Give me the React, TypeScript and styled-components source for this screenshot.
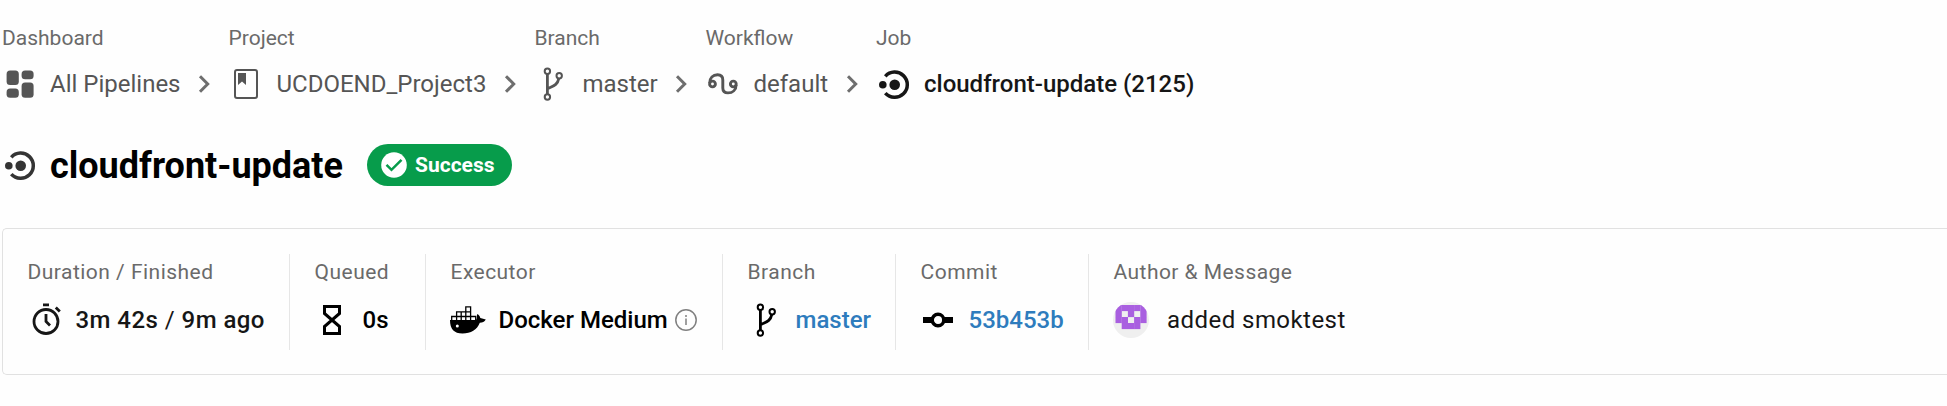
import React from 'react';
import styled, { createGlobalStyle } from 'styled-components';

const Global = createGlobalStyle`
  body { margin: 0; background: #fefefe; font-family: Roboto, "Liberation Sans", sans-serif; overflow: hidden; }
  *, *::before, *::after { box-sizing: border-box; }
`;

const Page = styled.main`
  padding: 22px 0 0 2px;
`;

const Breadcrumbs = styled.nav`
  display: flex;
  height: 84px;
`;

const Crumb = styled.div<{ $width: number }>`
  width: ${p => p.$width}px;
  flex: none;
  white-space: nowrap;
`;

const Label = styled.div<{ $spacing?: number }>`
  font-size: 21px;
  line-height: 32px;
  color: #6a6a6a;
  letter-spacing: ${p => p.$spacing ?? 0}px;
`;

const CrumbLink = styled.div<{ $active?: boolean }>`
  display: flex;
  align-items: center;
  height: 36px;
  margin-top: 12px;
  font-size: 24px;
  font-weight: ${p => (p.$active ? 500 : 400)};
  color: ${p => (p.$active ? '#161616' : '#555')};
`;

const Icon = styled.svg<{ $gap?: number }>`
  width: 36px;
  height: 36px;
  margin-left: -0.5px;
  margin-right: ${p => p.$gap ?? 12.5}px;
  flex: none;
  overflow: visible;
`;

const Chevron = styled.svg`
  width: 24px;
  height: 24px;
  margin-left: auto;
  margin-right: 12.5px;
  flex: none;
`;

const Header = styled.header`
  display: flex;
  align-items: center;
  height: 42px;
  margin-top: 38px;
`;

const Title = styled.h1`
  margin: 0;
  width: 317px;
  padding-top: 1px;
  font-size: 36px;
  line-height: 42px;
  font-weight: 700;
  color: #000;
  white-space: nowrap;
`;

const Badge = styled.div`
  display: flex;
  align-items: center;
  gap: 8px;
  width: 145px;
  height: 42px;
  padding-left: 14px;
  border-radius: 21px;
  background: #079c4b;
  color: #fff;
  font-size: 21px;
  font-weight: 700;
`;

const Card = styled.section`
  display: flex;
  height: 147px;
  margin-top: 42px;
  padding: 25px 0 0 24.5px;
  border: 1px solid #e1e1e1;
  border-right: 0;
  border-radius: 5px 0 0 5px;
`;

const Cell = styled.div<{ $width?: number }>`
  width: ${p => (p.$width ? `${p.$width}px` : 'auto')};
  height: 96px;
  flex: none;
  margin-right: 24.5px;
  padding-top: 2px;
  border-right: ${p => (p.$width ? '1px solid #e6e6e6' : '0')};
  white-space: nowrap;
`;

const Value = styled.div<{ $color?: string; $weight?: number; $spacing?: number }>`
  display: flex;
  align-items: center;
  height: 36px;
  margin-top: 14px;
  font-size: 24px;
  font-weight: ${p => p.$weight ?? 500};
  letter-spacing: ${p => p.$spacing ?? 0}px;
  color: ${p => p.$color ?? '#000'};
`;

const Slash = styled.span`
  font-weight: 400;
`;

const Info = styled.svg`
  width: 22px;
  height: 22px;
  margin-left: 7px;
`;

const Arrow = () => (
  <Chevron viewBox="0 0 24 24" fill="none" stroke="#6e6e6e" strokeWidth="3">
    <path d="M8 4.2 15.7 12 8 19.8" />
  </Chevron>
);

const BranchIcon = ({ color }: { color: string }) => (
  <Icon viewBox="0 0 36 36" fill="none" stroke={color} strokeWidth="2">
    <circle cx="13.4" cy="5.2" r="2.7" />
    <circle cx="25.2" cy="9.8" r="2.7" />
    <circle cx="13.4" cy="31" r="2.7" />
    <path d="M13.4 8v20M13.9 22.5c5-2.5 9.5-3 10.8-9.8" strokeWidth="2.8" />
  </Icon>
);

const JobIcon = ({ color }: { color: string }) => (
  <Icon viewBox="0 0 36 36" fill={color}>
    <circle cx="6.8" cy="18.7" r="3.8" />
    <circle cx="18.7" cy="18.7" r="5.3" />
    <path d="M9.3 10.3A12.6 12.6 0 1 1 9.3 27.1" fill="none" stroke={color} strokeWidth="3.5" />
  </Icon>
);

const identicon = ['11111', '10101', '11011', '01110'];

export default function App() {
  return (
    <Page>
      <Global />
      <Breadcrumbs>
        <Crumb $width={226.5}>
          <Label>Dashboard</Label>
          <CrumbLink>
            <Icon viewBox="0 0 36 36" fill="#555">
              <rect x="4.6" y="4.4" width="12.2" height="14.6" rx="3.5" />
              <rect x="19.6" y="4.4" width="12" height="8.8" rx="3.5" />
              <rect x="4.6" y="22.4" width="12.2" height="9.3" rx="3.5" />
              <rect x="19.6" y="16.4" width="12" height="15.3" rx="3.5" />
            </Icon>
            All Pipelines
            <Arrow />
          </CrumbLink>
        </Crumb>
        <Crumb $width={306}>
          <Label>Project</Label>
          <CrumbLink>
            <Icon viewBox="0 0 36 36">
              <rect x="7" y="4" width="22" height="28" rx="2" fill="none" stroke="#555" strokeWidth="2" />
              <path d="M10 7h8v12l-4-3.5-4 3.5z" fill="#555" />
            </Icon>
            UCDOEND_Project3
            <Arrow />
          </CrumbLink>
        </Crumb>
        <Crumb $width={171}>
          <Label>Branch</Label>
          <CrumbLink>
            <BranchIcon color="#555" />
            master
            <Arrow />
          </CrumbLink>
        </Crumb>
        <Crumb $width={170.5}>
          <Label>Workflow</Label>
          <CrumbLink>
            <Icon viewBox="-0.5 0 36 36" fill="none" stroke="#555" strokeWidth="2.9">
              <circle cx="7" cy="18" r="2.9" />
              <circle cx="27.8" cy="18" r="2.9" />
              <path d="M4.2 17C4.2 12 7.5 8.8 12 8.8c3.5 0 5.3 2 5.3 5.2v8c0 3 2 4.9 5.2 4.9 4.6 0 8.1-3 8.1-8" />
            </Icon>
            default
            <Arrow />
          </CrumbLink>
        </Crumb>
        <Crumb $width={400}>
          <Label>Job</Label>
          <CrumbLink $active>
            <JobIcon color="#161616" />
            cloudfront-update (2125)
          </CrumbLink>
        </Crumb>
      </Breadcrumbs>

      <Header>
        <JobIcon color="#343434" />
        <Title>cloudfront-update</Title>
        <Badge>
          <svg width="26" height="26" viewBox="0 0 26 26">
            <circle cx="13" cy="13" r="12.8" fill="#fff" />
            <path d="M5.5 12.8 10.5 17.8 20.5 7.8" fill="none" stroke="#079c4b" strokeWidth="2.5" />
          </svg>
          Success
        </Badge>
      </Header>

      <Card>
        <Cell $width={262.5}>
          <Label $spacing={0.48}>Duration / Finished</Label>
          <Value $color="#161616" $spacing={0.45}>
            <Icon viewBox="0 0 36 36" fill="none" stroke="#161616" strokeWidth="2.8">
              <circle cx="19" cy="19.5" r="12" />
              <path d="M16 2.8h6M28.8 5.6l4 4M19 12v7.5l4 4" />
            </Icon>
            <span>3m 42s <Slash>/</Slash> 9m ago</span>
          </Value>
        </Cell>
        <Cell $width={111.5}>
          <Label $spacing={0.5}>Queued</Label>
          <Value>
            <Icon viewBox="0 0 36 36" fill="none" stroke="#000" strokeWidth="3">
              <path d="M10.5 4.5h15v7L10.5 24.5v7h15v-7L10.5 11.5z" />
            </Icon>
            0s
          </Value>
        </Cell>
        <Cell $width={272.5}>
          <Label $spacing={0.45}>Executor</Label>
          <Value>
            <Icon viewBox="0 0 36 36">
              <path d="M0 18h26c1.5-1.5.3-3.6 1.3-6 1.700.8 2.700 2.300 3 4l5.500 1.600c-1.300 2.400-3.300 3.200-6 3.200C27 28 21 31.500 12.500 31.500 4 31.500 0 27 0 18z" />
              <path d="M1.7 18v-3.500h24V18M6.600 18v-8.200h14V18M15.800 18V4.900h4.800V18M11.200 10v8" fill="none" stroke="#000" strokeWidth="1.3" />
              <circle cx="7.300" cy="24" r="1.5" fill="#fff" />
            </Icon>
            Docker Medium
            <Info viewBox="0 0 22 22" fill="none" stroke="#808080" strokeWidth="1.5">
              <circle cx="11" cy="11" r="10.2" />
              <path d="M11 9.500V16M11 6v2" />
            </Info>
          </Value>
        </Cell>
        <Cell $width={148.5}>
          <Label $spacing={0.5}>Branch</Label>
          <Value $color="#2e7cbd">
            <BranchIcon color="#000" />
            master
          </Value>
        </Cell>
        <Cell $width={168.5}>
          <Label $spacing={0.5}>Commit</Label>
          <Value $color="#2e7cbd">
            <Icon viewBox="0 0 36 36">
              <path d="M3 15h30v6H3z" />
              <circle cx="18" cy="18" r="5.8" fill="#fff" stroke="#000" strokeWidth="3.5" />
            </Icon>
            53b453b
          </Value>
        </Cell>
        <Cell>
          <Label $spacing={0.45}>Author &amp; Message</Label>
          <Value $color="#161616" $weight={400} $spacing={0.45}>
            <Icon viewBox="0 0 36 36" $gap={18}>
              <clipPath id="avatar"><circle cx="18" cy="18" r="18" /></clipPath>
              <g clipPath="url(#avatar)">
                <rect width="36" height="36" fill="#efefef" />
                {identicon.map((row, y) =>
                  [...row].map((v, x) => v === '1' && (
                    <rect key={`${x}-${y}`} x={2.5 + x * 6.2} y={3 + y * 6} width="6.3" height="6.1" fill="#a95fe0" />
                  ))
                )}
              </g>
            </Icon>
            added smoktest
          </Value>
        </Cell>
      </Card>
    </Page>
  );
}
